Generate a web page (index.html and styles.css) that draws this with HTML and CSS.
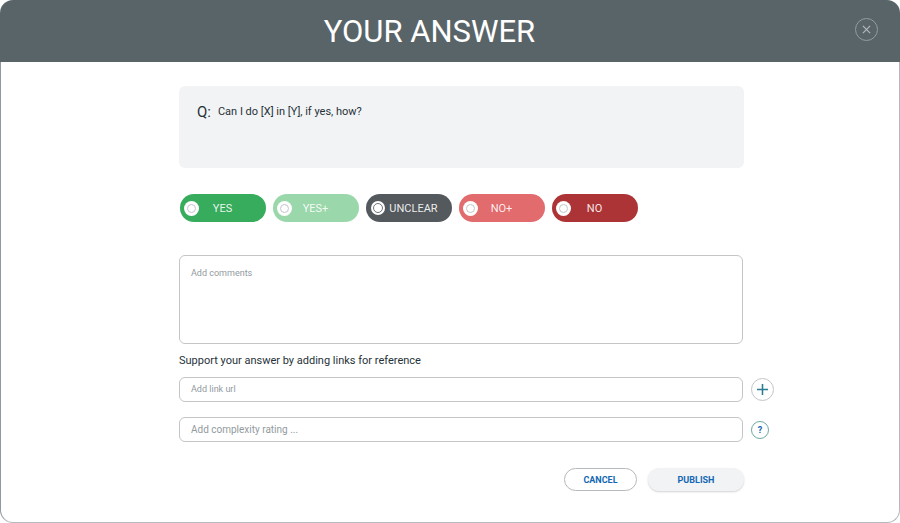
FILE: index.html
```html
<!DOCTYPE html>
<html lang="en">
<head>
  <meta charset="UTF-8">
  <meta name="viewport" content="width=device-width, initial-scale=1.0">
  <title>Your Answer</title>
  <link rel="stylesheet" href="styles.css">
</head>
<body>
  <div class="modal">
    <header>
      <h1>YOUR ANSWER</h1>
      <button type="button" class="close" aria-label="Close">
        <svg width="9" height="9" viewBox="0 0 10 10" fill="none" stroke="currentColor" stroke-width="1.3"><path d="M1 1l8 8M9 1l-8 8"/></svg>
      </button>
    </header>

    <form>
      <div class="question">
        <span class="q-mark">Q:</span>
        <p>Can I do [X] in [Y], if yes, how?</p>
      </div>

      <div class="options">
        <label class="option yes"><input type="radio" name="answer"><span>YES</span></label>
        <label class="option yes-plus"><input type="radio" name="answer"><span>YES+</span></label>
        <label class="option unclear"><input type="radio" name="answer"><span>UNCLEAR</span></label>
        <label class="option no-plus"><input type="radio" name="answer"><span>NO+</span></label>
        <label class="option no"><input type="radio" name="answer"><span>NO</span></label>
      </div>

      <textarea class="field" placeholder="Add comments" aria-label="Comments"></textarea>

      <label class="links-label" for="link">Support your answer by adding links for reference</label>
      <div class="row">
        <input class="field" type="text" id="link" placeholder="Add link url">
        <button type="button" class="round add" aria-label="Add link">
          <svg width="11" height="11" viewBox="0 0 12 12" fill="none" stroke="currentColor" stroke-width="1.7"><path d="M6 0v12M0 6h12"/></svg>
        </button>
      </div>
      <div class="row">
        <input class="field rating" type="text" placeholder="Add complexity rating ..." aria-label="Complexity rating">
        <button type="button" class="round help" aria-label="Help">?</button>
      </div>

      <div class="actions">
        <button type="button" class="cancel">CANCEL</button>
        <button type="submit" class="publish">PUBLISH</button>
      </div>
    </form>
  </div>
</body>
</html>
```

FILE: styles.css
```css
*, *::before {
  box-sizing: border-box;
}
body {
  margin: 0;
  background: white;
  color: #263238;
  font-family: Roboto, sans-serif;
  font-size: 11px;
}
button, input, textarea {
  font-family: inherit;
  margin: 0;
}
button {
  padding: 0;
  cursor: pointer;
}
.modal {
  display: flex;
  flex-direction: column;
  min-height: 100vh;
}
header {
  display: flex;
  align-items: center;
  height: 62px;
  padding: 0 22px 0 4px;
  border-radius: 13px 13px 0 0;
  background: #596468;
  color: white;
}
h1 {
  flex: 1;
  margin: 0;
  padding-top: 2px;
  font-size: 31px;
  font-weight: 400;
  line-height: 36px;
  text-align: center;
}
.close {
  display: flex;
  align-items: center;
  justify-content: center;
  width: 23px;
  height: 23px;
  margin-bottom: 4px;
  border: 1px solid #949c9f;
  border-radius: 50%;
  background: none;
  color: #b4babc;
}
form {
  flex: 1;
  padding: 24px 126px 30px 178px;
  border: 1px solid #b4babd;
  border-left-color: #8f999e;
  border-top: none;
  border-radius: 0 0 13px 13px;
}
.question {
  display: flex;
  gap: 7px;
  min-height: 82px;
  margin-right: 29px;
  padding: 16px 18px;
  border-radius: 6px;
  background: #f2f3f5;
}
.q-mark {
  font-size: 15px;
  line-height: 20px;
}
.question p {
  margin: 0;
  font-size: 11px;
  line-height: 20px;
}
.options {
  display: flex;
  gap: 7px;
  margin: 26px 0 33px 1px;
}
.option {
  display: flex;
  align-items: center;
  width: 86px;
  height: 28px;
  padding: 0 20px 0 4px;
  border-radius: 14px;
  color: rgba(255, 255, 255, 0.9);
  font-size: 11px;
  cursor: pointer;
}
.option span {
  flex: 1;
  padding-top: 1px;
  text-align: center;
}
.option input {
  appearance: none;
  display: flex;
  flex: none;
  align-items: center;
  justify-content: center;
  width: 15px;
  height: 15px;
  border-radius: 50%;
  background: white;
}
.option input::before {
  content: "";
  width: 9px;
  height: 9px;
  border: 1px solid #c3c5c7;
  border-radius: 50%;
}
.yes {
  background: #36ac5c;
}
.yes-plus {
  background: #9ad7aa;
}
.unclear {
  padding-right: 10px;
  padding-left: 5px;
  background: #54595d;
}
.unclear input {
  width: 14px;
  height: 14px;
}
.unclear input::before {
  width: 10px;
  height: 10px;
  border-color: #6f7477;
}
.no-plus {
  background: #e16b6d;
}
.no {
  background: #ad3436;
}
.field {
  display: block;
  border: 1px solid #c3c5c7;
  border-radius: 6px;
  background: white;
  color: #263238;
  font-size: 9px;
  outline: none;
}
.field::placeholder {
  color: #929a9e;
}
.field:focus {
  border-color: #1268b3;
}
textarea.field {
  width: calc(100% - 30px);
  height: 89px;
  padding: 11px;
  line-height: 12px;
  resize: none;
}
.links-label {
  display: block;
  margin: 9px 0 8px;
  font-size: 11px;
  line-height: 16px;
}
.row {
  display: grid;
  grid-template-columns: 1fr 22px;
  align-items: center;
  gap: 8px;
  margin-bottom: 15px;
}
.row .field {
  width: 100%;
  height: 25px;
  padding: 0 11px 1px;
}
.row .rating {
  font-size: 10px;
}
.round {
  display: flex;
  align-items: center;
  justify-content: center;
  width: 23px;
  height: 23px;
  border: 1px solid #c3c5c7;
  border-radius: 50%;
  background: white;
}
.add {
  color: #2b7c92;
}
.help {
  width: 18px;
  height: 18px;
  border-color: #6fa8a3;
  color: #1268b3;
  font-size: 9px;
  font-weight: 700;
}
.actions {
  display: flex;
  justify-content: flex-end;
  gap: 11px;
  margin: 26px 29px 0 0;
}
.actions button {
  height: 23px;
  border-radius: 12px;
  color: #1268b3;
  font-size: 9px;
  font-weight: 700;
}
.cancel {
  width: 73px;
  border: 1px solid #b4babd;
  background: white;
}
.publish {
  width: 96px;
  border: none;
  background: #f2f3f5;
  box-shadow: 0 1px 2px rgba(0, 0, 0, 0.18);
}
```
